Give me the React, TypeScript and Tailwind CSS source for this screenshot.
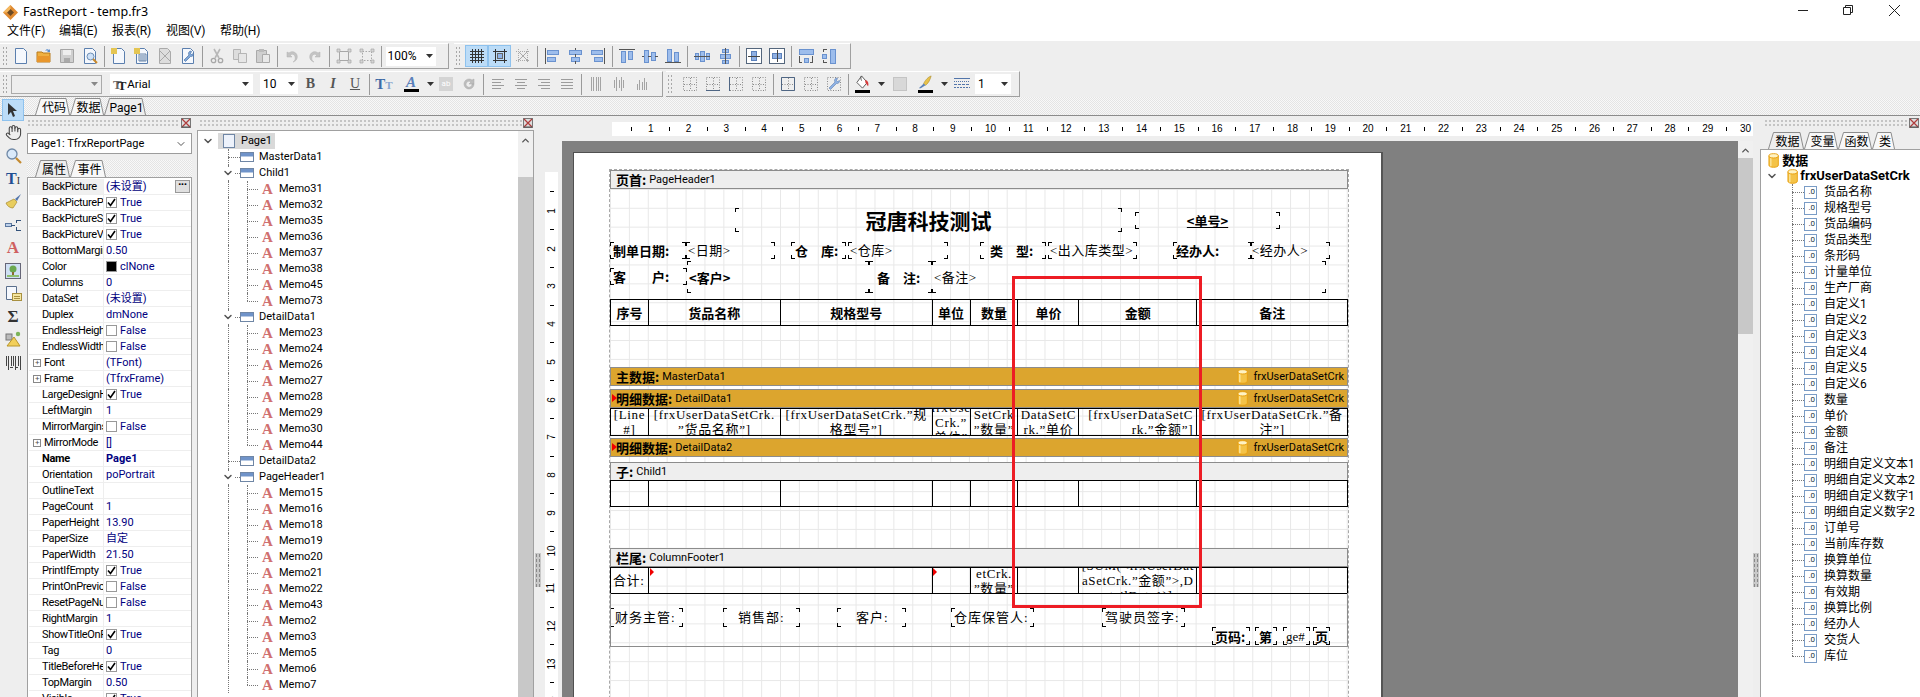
import React from "react";
import { ChevronDown, ChevronUp, Hand } from "lucide-react";

const Ic = ({ children, size = 16 }: { children: React.ReactNode; size?: number }) => (
  <svg viewBox="0 0 16 16" width={size} height={size} fill="none" className="shrink-0">{children}</svg>
);

const Doc = ({ s = "#5b7fae", f = "#f5f8fd" }: { s?: string; f?: string }) => (
  <path d="M2.5 .5h8l3 3v12h-11z" fill={f} stroke={s} />
);
const Star = () => (
  <g fill="#e8c43a"><rect x="0" y="0" width="6" height="6" fill="#f6e48a" /><path d="M0 1h6M0 3h6M0 5h6M1 0v6M3 0v6M5 0v6" stroke="#d4a820" strokeWidth=".6" /></g>
);
const IconNew = () => <Ic><Doc /></Ic>;
const IconOpen = () => (
  <Ic><path d="M1 4h5l1 1h7v9H1z" fill="#f0b040" stroke="#b87a1c" /><path d="M1 8h13v6H1z" fill="#e8962c" /><path d="M9 3c1-2 3-2 4-1l1-1v3h-3l1-1c-1-.6-2-.4-3 0z" fill="#5b8ed0" /></Ic>
);
const IconSave = () => (
  <Ic><path d="M1.500 1.500h13v13h-13z" fill="#cfcfcf" stroke="#a5a5a5" /><path d="M4 2h8v5H4z" fill="#eee" /><path d="M5 10h6v4H5z" fill="#aaa" /></Ic>
);
const IconPreview = () => (
  <Ic><Doc /><circle cx="8.500" cy="8.500" r="3.500" fill="#cfe2f8" stroke="#6e8fb5" /><path d="M11 11l4 4" stroke="#c98a2c" strokeWidth="2" /></Ic>
);
const IconNewPage = () => <Ic><Doc /><Star /></Ic>;
const IconNewDialog = () => (
  <Ic><Doc /><path d="M5 6h7v7H5z" fill="#e4ecf8" stroke="#6b86a8" /><path d="M6 8h5M6 10h5M6 12h5" stroke="#6b86a8" /><Star /></Ic>
);
const IconDelPage = () => (
  <Ic><Doc s="#aaa" f="#ddd" /><path d="M3 3l10 10M13 3L3 13" stroke="#a8a8a8" /></Ic>
);
const IconPageSet = () => (
  <Ic><Doc /><path d="M11 3a2.500 2.500 0 0 0-2 4l-5 5 1.500 1.500 5-5a2.500 2.500 0 0 0 3-3l-2 1-1-1 1-2z" fill="#7ea6d8" stroke="#4e75a8" strokeWidth=".7" /></Ic>
);
const IconCut = () => (
  <Ic><path d="M5 1l5 9M11 1L6 10" stroke="#b8b8b8" strokeWidth="1.600" /><circle cx="4.500" cy="12.500" r="2.200" stroke="#a8a8a8" strokeWidth="1.300" /><circle cx="11.500" cy="12.500" r="2.200" stroke="#a8a8a8" strokeWidth="1.300" /></Ic>
);
const IconCopy = () => (
  <Ic><path d="M1.500 1.500h7v10h-7z" fill="#ddd" stroke="#b5b5b5" /><path d="M6.500 5.500h8v9h-8z" fill="#e6e6e6" stroke="#b5b5b5" /></Ic>
);
const IconPaste = () => (
  <Ic><path d="M1.500 2.500h10v12h-10z" fill="#cfcfcf" stroke="#aaa" /><path d="M4 1h5v3H4z" fill="#bbb" /><path d="M7.500 6.500h7v8h-7z" fill="#e8e8e8" stroke="#aaa" /></Ic>
);
const IconUndo = () => (
  <Ic><path d="M3 4v5h5L6 7c3-2 6 0 5 5-1 1.500-2 2-2 2 5-1 6-8 1-10-2-.8-4 0-5 1z" fill="#c4c4c4" stroke="#b0b0b0" strokeWidth=".5" /></Ic>
);
const IconRedo = () => (
  <Ic><path d="M13 4v5H8l2-2c-3-2-6 0-5 5 1 1.500 2 2 2 2-5-1-6-8-1-10 2-.8 4 0 5 1z" fill="#c4c4c4" stroke="#b0b0b0" strokeWidth=".5" /></Ic>
);
const IconGroup = ({ alt = false }: { alt?: boolean }) => (
  <Ic>
    <rect x="3.500" y="3.500" width="9" height="9" stroke="#a8a8a8" strokeDasharray={alt ? "1.500 1.500" : undefined} />
    <path d="M1 1h3v3H1zM12 1h3v3h-3zM1 12h3v3H1zM12 12h3v3h-3z" fill="#d6d6d6" stroke="#a8a8a8" strokeWidth=".7" />
  </Ic>
);
const IconGrid = () => (
  <Ic><path d="M3.500 1v14M6.500 1v14M9.500 1v14M12.500 1v14M1 3.500h14M1 6.500h14M1 9.500h14M1 12.500h14" stroke="#333" /></Ic>
);
const IconSnap = () => (
  <Ic><path d="M3.500 1v14M12.500 1v14M1 3.500h14M1 12.500h14" stroke="#333" /><rect x="5.500" y="5.500" width="5" height="5" fill="#8fb4e8" stroke="#666" /></Ic>
);
const IconSnap3 = () => (
  <Ic><path d="M3.500 1v14M12.500 1v14M1 3.500h14M1 12.500h14" stroke="#aaa" strokeDasharray="1 1" /><path d="M3 3l10 10M13 3L3 13" stroke="#aaa" /></Ic>
);
type R = [number, number, number, number];
const Bars = ({ r, l }: { r: R[]; l: string }) => (
  <Ic>
    {r.map((b, i) => (<rect key={i} x={b[0] + 0.5} y={b[1] + 0.5} width={b[2]} height={b[3]} fill="#9dbdec" stroke="#6a92cf" />))}
    <path d={l} stroke="#555" />
  </Ic>
);
const Frame = () => (
  <Ic><rect x=".5" y=".5" width="15" height="15" stroke="#54667c" fill="#fff" /><rect x="5.500" y="3.500" width="5" height="9" fill="#8fb0e4" stroke="#5c82bc" /><path d="M2 8.500h12" stroke="#444" /></Ic>
);
const Frame2 = () => (
  <Ic><rect x=".5" y=".5" width="15" height="15" stroke="#54667c" fill="#fff" /><rect x="3.500" y="5.500" width="9" height="5" fill="#8fb0e4" stroke="#5c82bc" /><path d="M8.500 2v12" stroke="#444" /></Ic>
);
const Dash = ({ side }: { side?: "b" | "l" | "t" | "c" | "n" }) => (
  <Ic>
    <rect x="1.500" y="1.500" width="13" height="13" stroke="#8a8a8a" strokeDasharray="1 1.500" />
    <path d="M8.500 2v12M2 8.500h12" stroke="#8a8a8a" strokeDasharray="1 1.500" />
    {side === "b" && <path d="M1 14.500h14" stroke="#4f6684" />}
    {side === "l" && <path d="M1.500 1v14" stroke="#4f6684" />}
    {side === "t" && <path d="M1 1.500h14" stroke="#4f6684" />}
    {side === "c" && <path d="M1.500 1.500h13v13h-13z" stroke="#4f6684" />}
  </Ic>
);
const IconFrameWrench = () => (
  <Ic><rect x="1.500" y="1.500" width="13" height="13" stroke="#8a8a8a" strokeDasharray="1 1.500" /><path d="M11 2a2.500 2.500 0 0 0-2 4L3 12l1.500 1.500 6-6a2.500 2.500 0 0 0 3-3l-2 1-1-1 1-2z" fill="#8db1e4" stroke="#5f80b0" strokeWidth=".6" /></Ic>
);
const IconFill = () => (
  <div className="flex flex-col items-center w-[16px]">
    <Ic size={15}><path d="M7 1l6 7-5 6-6-6z" fill="#fff" stroke="#555" /><path d="M7 1c-1 1-1 3 0 5" stroke="#555" /><path d="M11 5c3 1 4 4 3 7-1-1-2-3-3-4z" fill="#d63a3a" /></Ic>
    <div className="w-[15px] h-[3px] bg-black" />
  </div>
);
const IconPen = () => (
  <div className="flex flex-col items-center w-[16px]">
    <Ic size={15}><path d="M14 1c-3 1-6 4-8 8l2 2c3-2 5-6 6-10z" fill="#e8c24a" stroke="#a88a28" strokeWidth=".6" /><path d="M6 9l2 2-5 3c-1 .5-2 0-2 0 1-1 3-3 5-5z" fill="#5b82b8" /></Ic>
    <div className="w-[15px] h-[3px] bg-black" />
  </div>
);
const IconLine = () => (
  <Ic><path d="M0 2.500h16" stroke="#5376ab" /><path d="M0 5.500h16" stroke="#5376ab" strokeDasharray="1 1" /><path d="M0 8.500h16" stroke="#5376ab" strokeDasharray="3 1" /><path d="M0 11.500h16" stroke="#5376ab" strokeDasharray="2 1" /></Ic>
);
const Tri = ({ c = "#333" }: { c?: string }) => (
  <svg width="7" height="4" viewBox="0 0 7 4" className="shrink-0"><path d="M0 0h7L3.500 4z" fill={c} /></svg>
);
const Db = ({ s = 14 }: { s?: number }) => (
  <svg viewBox="0 0 12 16" width={(s * 12) / 16} height={s} className="shrink-0">
    <path d="M1 3v10c0 3 10 3 10 0V3z" fill="#f4c348" stroke="#e8a010" />
    <path d="M3 5v9" stroke="#fbe39a" strokeWidth="1.500" />
    <ellipse cx="6" cy="3" rx="5" ry="2.300" fill="#fff3c4" stroke="#e8a010" />
  </svg>
);
const BandIcon = () => (
  <svg width="14" height="10" viewBox="0 0 14 10" className="shrink-0">
    <rect x=".5" y=".5" width="13" height="9" fill="#fff" stroke="#6f86a5" />
    <rect x="1" y="1" width="12" height="3.500" fill="#6f93c9" />
  </svg>
);
const CloseX = () => (
  <svg width="10" height="10" viewBox="0 0 10 10" className="shrink-0">
    <rect x=".5" y=".5" width="9" height="9" fill="#ddd" stroke="#777" />
    <path d="M1 1l8 8M9 1L1 9" stroke="#b03c3c" strokeWidth="1.200" />
    <path d="M1 9h8" stroke="#555" />
  </svg>
);
const Grip = () => <div className="w-[6px] h-[20px] shrink-0 bg-[radial-gradient(#a8a8a8_1px,transparent_1px)] bg-[size:3px_4px]" />;
const HGrip = ({ w }: { w: string }) => <div className={`${w} h-[8px] bg-[radial-gradient(#c4c4c4_1px,transparent_1px)] bg-[size:4px_4px]`} />;
const Sep = () => (
  <div className="w-[6px] h-[21px] shrink-0 flex justify-center"><div className="w-px h-full bg-[#9a9a9a]" /></div>
);
const Btn = ({ children, on }: { children?: React.ReactNode; on?: boolean }) => (
  <div className={`w-[23px] h-[22px] shrink-0 flex items-center justify-center ${on ? "bg-[#bcdcf7] border border-[#8ec2ee]" : ""}`}>{children}</div>
);

const Toolbar1 = () => (
  <div className="flex h-[28px] pt-[2px] gap-[5px]">
    <div className="w-[449px] h-[26px] flex items-center pl-[2px] border-b border-r border-[#a0a0a0] border-t border-t-white">
      <Grip /><div className="w-[1.500px]" />
      <Btn><IconNew /></Btn><Btn><IconOpen /></Btn><Btn><IconSave /></Btn><Btn><IconPreview /></Btn><Sep />
      <Btn><IconNewPage /></Btn><Btn><IconNewDialog /></Btn><Btn><IconDelPage /></Btn><Btn><IconPageSet /></Btn><Sep />
      <Btn><IconCut /></Btn><Btn><IconCopy /></Btn><Btn><IconPaste /></Btn><Sep />
      <Btn><IconUndo /></Btn><Btn><IconRedo /></Btn><Sep />
      <Btn><IconGroup /></Btn><Btn><IconGroup alt /></Btn><Sep />
      <div className="w-[50px] h-[19px] bg-white flex items-center justify-between pl-[2px] pr-[3px] text-[12px] ml-[1px]"><span>100%</span><Tri /></div>
    </div>
    <div className="w-[397px] h-[26px] flex items-center pl-[1px] border-b border-r border-[#a0a0a0] border-t border-t-white">
      <Grip /><div className="w-[4px]" />
      <Btn on><IconGrid /></Btn><Btn on><IconSnap /></Btn><Btn><IconSnap3 /></Btn><Sep />
      <Btn><Bars r={[[3, 2, 11, 4], [3, 9, 8, 4]]} l="M1.500 0v16" /></Btn>
      <Btn><Bars r={[[2, 2, 12, 4], [4, 9, 8, 4]]} l="M8.500 0v2M8.500 6v3M8.500 13v3" /></Btn>
      <Btn><Bars r={[[1, 2, 11, 4], [4, 9, 8, 4]]} l="M14.500 0v16" /></Btn><Sep />
      <Btn><Bars r={[[2, 3, 4, 11], [9, 3, 4, 8]]} l="M0 1.500h16" /></Btn>
      <Btn><Bars r={[[2, 2, 4, 12], [9, 4, 4, 8]]} l="M0 8.500h2M6 8.500h3M13 8.500h3" /></Btn>
      <Btn><Bars r={[[2, 1, 4, 12], [9, 4, 4, 9]]} l="M0 14.500h16" /></Btn><Sep />
      <Btn><Bars r={[[1, 5, 3, 6], [6, 3, 4, 10], [12, 5, 3, 6]]} l="M0 8.500h16" /></Btn>
      <Btn><Bars r={[[5, 1, 6, 3], [3, 6, 10, 4], [5, 12, 6, 3]]} l="M8.500 0v16" /></Btn><Sep />
      <Btn><Frame /></Btn><Btn><Frame2 /></Btn><Sep />
      <Btn><Bars r={[[1, 1, 14, 5], [6, 10, 4, 4]]} l="M1.500 8v6M14.500 8v6M1 14.500h3M12 14.500h3" /></Btn>
      <Btn><Bars r={[[9, 1, 5, 14], [1, 6, 4, 4]]} l="M2 1.500h4M2 14.500h4M2.500 1v3M2.500 12v3" /></Btn>
    </div>
  </div>
);

const Toolbar2 = () => (
  <div className="flex h-[28px] pt-[2px] gap-[3px]">
    <div className="w-[663px] h-[26px] flex items-center pl-[2px] border-b border-r border-[#a0a0a0] border-t border-t-white">
      <Grip />
      <div className="ml-[3px] w-[91px] h-[19px] border border-[#aaa] bg-[#eee] flex items-center justify-end pr-[3px]"><Tri c="#888" /></div>
      <div className="ml-[8px] w-[143px] h-[20px] bg-white flex items-center justify-between pr-[4px] pl-[3px]">
        <span className="flex items-center">
          <span className="font-['Liberation_Serif',serif] font-bold text-[13px] text-[#666] leading-none">T</span>
          <span className="font-['Liberation_Serif',serif] font-bold text-[13px] text-[#222] leading-none -ml-[4px] mt-[2px]">T</span>
          <span className="text-[11.500px] ml-[1px]">Arial</span>
        </span><Tri />
      </div>
      <div className="ml-[7px] w-[38px] h-[20px] bg-white flex items-center justify-between pr-[3px] pl-[3px] text-[12px]"><span>10</span><Tri /></div>
      <div className="ml-[1px] w-[23px] text-center font-['Liberation_Serif',serif] font-bold text-[14px] text-[#555]">B</div>
      <div className="w-[22px] text-center font-['Liberation_Serif',serif] italic font-bold text-[14px] text-[#555]">I</div>
      <div className="w-[22px] text-center font-['Liberation_Serif',serif] text-[14px] text-[#555] underline">U</div><Sep />
      <div className="w-[24px] text-center font-['Liberation_Serif',serif] font-bold text-[15px] text-[#3f6aa5]">T<span className="text-[11px] text-[#88a6cf]">T</span></div>
      <div className="w-[24px] ml-[3px] flex flex-col items-center leading-none"><span className="font-['Liberation_Serif',serif] italic font-bold text-[15px] text-[#5a80bb] leading-[13px]">A</span><div className="w-[15px] h-[3px] bg-black" /></div>
      <div className="ml-[2px] w-[10px] flex justify-center"><Tri /></div>
      <div className="ml-[4px] w-[14px] h-[14px] bg-[#d4d4d4] text-[8px] text-white flex items-center justify-center">ab</div>
      <div className="w-[23px] ml-[4px] flex justify-center"><Ic><path d="M13 8a5 5 0 1 1-2-4l2-1v5H8l2-2a3 3 0 1 0 1 2z" fill="#bdbdbd" stroke="#aaa" strokeWidth=".5" /></Ic></div><Sep />
      {["M2 3.500h12M2 6.500h9M2 9.500h12M2 12.500h9", "M2 3.500h12M4 6.500h8M2 9.500h12M4 12.500h8", "M2 3.500h12M5 6.500h9M2 9.500h12M5 12.500h9", "M2 3.500h12M2 6.500h12M2 9.500h12M2 12.500h12"].map((d, i) => (
        <Btn key={i}><Ic><path d={d} stroke="#9c9c9c" /></Ic></Btn>
      ))}<Sep />
      {["M3.500 1v14M5.500 1v14M8.500 1v14M10.500 1v14M12.500 1v14", "M3.500 4v8M5.500 1v14M8.500 4v8M10.500 1v14M12.500 4v8", "M3.500 8v6M5.500 4v10M8.500 6v8M10.500 2v12M12.500 6v8"].map((d, i) => (
        <Btn key={i}><Ic><path d={d} stroke="#a4a4a4" /></Ic></Btn>
      ))}
    </div>
    <div className="w-[354px] h-[26px] flex items-center pl-[1px] border-b border-r border-[#a0a0a0] border-t border-t-white">
      <Grip /><div className="w-[5px]" />
      <Btn><Dash side="n" /></Btn><Btn><Dash side="b" /></Btn><Btn><Dash side="l" /></Btn><Btn><Dash side="n" /></Btn><Sep />
      <Btn><Dash side="c" /></Btn><Btn><Dash side="n" /></Btn><Btn><IconFrameWrench /></Btn><Sep />
      <div className="ml-[3px] w-[16px]"><IconFill /></div>
      <div className="ml-[6px] w-[10px] flex justify-center"><Tri /></div>
      <div className="ml-[7px] w-[14px] h-[14px] bg-[#d8d8d8] border border-[#c4c4c4]" />
      <div className="ml-[10px] w-[16px]"><IconPen /></div>
      <div className="ml-[6px] w-[10px] flex justify-center"><Tri /></div>
      <div className="ml-[5px]"><IconLine /></div>
      <div className="ml-[5px] w-[36px] h-[20px] bg-white flex items-center justify-between pl-[3px] pr-[3px] text-[12px]"><span>1</span><Tri /></div>
    </div>
  </div>
);

const Tab = ({ label, w, active }: { label: string; w: number; active?: boolean }) => (
  <div className="relative h-[17px] flex items-center justify-center shrink-0 text-[12px]" style={{ width: w }}>
    <svg className="absolute inset-0" width={w} height={17} viewBox={`0 0 ${w} 17`}>
      <path d={`M0.500 17L5.500 .5H${w - 4}L${w - 0.5} 17`} fill={active ? "#eee" : "#f8f8f8"} stroke="#8c8c8c" />
    </svg>
    <span className="relative pl-[3px] mt-[2px]">{label}</span>
  </div>
);

const ToolItem = ({ children }: { children: React.ReactNode }) => (
  <div className="h-[23px] w-full flex items-center justify-center">{children}</div>
);

const ToolColumn = () => (
  <div className="w-[24px] shrink-0 flex flex-col items-center pl-[2px]">
    <div className="-mt-[17px] relative z-10 w-[22px] h-[22px] bg-[#bcdcf7] border border-[#8ec2ee] flex items-center justify-center">
      <svg width="14" height="16" viewBox="0 0 14 16"><path d="M2 1v12l3-3 2 5 2-1-2-5h4z" fill="#333" /></svg>
    </div>
    <ToolItem><Hand size={17} strokeWidth={1.500} color="#444" /></ToolItem>
    <ToolItem><svg width="17" height="17" viewBox="0 0 17 17"><circle cx="7" cy="7" r="5" fill="#d9e9fa" stroke="#6f88a6" strokeWidth="1.300" /><path d="M11 11l5 5" stroke="#c48a30" strokeWidth="2.200" /></svg></ToolItem>
    <ToolItem><span className="font-['Liberation_Serif',serif] font-bold text-[16px] text-[#1f4f92] leading-none">T<span className="text-[10px] font-normal text-[#333]">I</span></span></ToolItem>
    <ToolItem><svg width="17" height="17" viewBox="0 0 17 17"><path d="M16 1l-6 5 2 2z" fill="#5376ab" /><path d="M9 6l3 3-4 6C5 15 2 13 1 10z" fill="#e8cd5e" stroke="#a88a30" strokeWidth=".7" /></svg></ToolItem>
    <ToolItem><svg width="18" height="16" viewBox="0 0 18 16"><rect x="1.500" y="6.500" width="6" height="3" fill="#bcd0ea" stroke="#5c78a0" /><path d="M7 8.500h4M12 3.500h5M12 13.500h5M12.500 3v3M12.500 10v3" stroke="#33527a" /></svg></ToolItem>
    <ToolItem><span className="font-['Liberation_Serif',serif] font-bold text-[17px] text-[#cf6060] leading-none">A</span></ToolItem>
    <ToolItem><svg width="16" height="16" viewBox="0 0 16 16"><rect x=".5" y=".5" width="15" height="15" fill="#cfe0f4" stroke="#667" /><circle cx="8" cy="6" r="3.500" fill="#6aa84f" /><rect x="7" y="9" width="2" height="4" fill="#8a6a30" /><rect x="2" y="12" width="12" height="2" fill="#8fbf70" /></svg></ToolItem>
    <ToolItem><svg width="17" height="17" viewBox="0 0 17 17"><path d="M1.500 1.500h10v13h-10z" fill="#f5f8fd" stroke="#5a6f8c" /><rect x="7.500" y="8.500" width="9" height="7" fill="#f4e6a0" stroke="#a89040" /><path d="M9 11.500h6M9 13.500h6" stroke="#a89040" /></svg></ToolItem>
    <ToolItem><span className="font-['Liberation_Serif',serif] font-bold text-[17px] text-[#333] leading-none">Σ</span></ToolItem>
    <ToolItem><svg width="17" height="17" viewBox="0 0 17 17"><rect x="1" y="3" width="6" height="6" fill="#bbb" stroke="#777" /><circle cx="13" cy="3" r="2.200" fill="#7db45a" /><path d="M9 6l6 9H2z" fill="#f2cf5a" stroke="#b8962c" /></svg></ToolItem>
    <ToolItem><svg width="16" height="14" viewBox="0 0 16 14"><path d="M1.500 0v10M3.500 0v14M6.500 0v10M8.500 0v10M10.500 0v14M13.500 0v10M15.500 0v14" stroke="#444" /><path d="M5 11.500h3M11 11.500h2" stroke="#444" /></svg></ToolItem>
  </div>
);

type Row = { n: string; v?: string; ck?: boolean; sq?: boolean; plus?: boolean; bold?: boolean; sel?: boolean };
const rows: Row[] = [
  { n: "BackPicture", v: "(未设置)", sel: true },
  { n: "BackPicturePr", v: "True", ck: true },
  { n: "BackPictureSt", v: "True", ck: true },
  { n: "BackPictureVi", v: "True", ck: true },
  { n: "BottomMargin", v: "0.50" },
  { n: "Color", v: "clNone", sq: true },
  { n: "Columns", v: "0" },
  { n: "DataSet", v: "(未设置)" },
  { n: "Duplex", v: "dmNone" },
  { n: "EndlessHeigh", v: "False", ck: false },
  { n: "EndlessWidth", v: "False", ck: false },
  { n: "Font", v: "(TFont)", plus: true },
  { n: "Frame", v: "(TfrxFrame)", plus: true },
  { n: "LargeDesignH", v: "True", ck: true },
  { n: "LeftMargin", v: "1" },
  { n: "MirrorMargins", v: "False", ck: false },
  { n: "MirrorMode", v: "[]", plus: true },
  { n: "Name", v: "Page1", bold: true },
  { n: "Orientation", v: "poPortrait" },
  { n: "OutlineText", v: "" },
  { n: "PageCount", v: "1" },
  { n: "PaperHeight", v: "13.90" },
  { n: "PaperSize", v: "自定" },
  { n: "PaperWidth", v: "21.50" },
  { n: "PrintIfEmpty", v: "True", ck: true },
  { n: "PrintOnPrevic", v: "False", ck: false },
  { n: "ResetPageNu", v: "False", ck: false },
  { n: "RightMargin", v: "1" },
  { n: "ShowTitleOnP", v: "True", ck: true },
  { n: "Tag", v: "0" },
  { n: "TitleBeforeHe", v: "True", ck: true },
  { n: "TopMargin", v: "0.50" },
  { n: "Visible", v: "True", ck: true },
];

const Inspector = () => (
  <div className="w-[165px] shrink-0 ml-[3px] flex flex-col h-full">
    <div className="flex items-center h-[8px] mt-[3px] gap-[1px]"><HGrip w="w-[153px]" /><CloseX /></div>
    <div className="mt-[6px] h-[21px] border border-[#9c9c9c] bg-white flex items-center justify-between pl-[3px] pr-[4px] text-[11px]">
      <span>Page1: TfrxReportPage</span><ChevronDown size={12} color="#555" />
    </div>
    <div className="mt-[6px] h-[17px] flex pl-[8px] bg-[repeating-conic-gradient(#e4e4e4_0_25%,#f8f8f8_0_50%)] bg-[size:2px_2px]">
      <Tab label="属性" w={35} active /><Tab label="事件" w={36} />
    </div>
    <div className="flex-1 min-h-0 overflow-hidden border-x border-t border-[#a0a0a0] bg-white pt-[1px] pl-[1px]">
      {rows.map((r) => (
        <div key={r.n} className="h-[16px] flex border-b border-[#eeeeee] items-center relative">
          <div className={`w-[75px] h-full shrink-0 overflow-hidden whitespace-nowrap border-r border-[#eeeeee] flex items-center tracking-[-0.35px] ${r.sel ? "bg-[#f0f0f0]" : ""} ${r.bold ? "font-bold" : ""}`}>
            {r.plus ? (
              <span className="w-[13px] h-[9px] flex items-center justify-start ml-[4px] shrink-0 mr-[1px]">
                <span className="w-[8px] h-[8px] border border-[#888] text-[8px] leading-[6px] text-center text-[#555] block">+</span>
              </span>
            ) : <span className="w-[13px] shrink-0" />}
            <span className={r.plus ? "-ml-[3px]" : ""}>{r.n}</span>
          </div>
          <div className={`pl-[2px] flex items-center text-[#000080] whitespace-nowrap ${r.bold ? "font-bold" : ""}`}>
            {r.ck !== undefined && (
              <span className="w-[11px] h-[11px] border border-[#999] bg-white mr-[3px] flex items-center justify-center">
                {r.ck && <svg width="9" height="9" viewBox="0 0 9 9"><path d="M1 4.500l2.500 3L8 1" stroke="#000" strokeWidth="1.600" fill="none" /></svg>}
              </span>
            )}
            {r.sq && <span className="w-[11px] h-[11px] bg-black border border-[#999] mr-[3px]" />}
            <span>{r.v}</span>
          </div>
          {r.sel && (
            <div className="absolute right-[1px] top-[1px] w-[15px] h-[13px] bg-[#e0e0e0] border border-[#999] text-[8px] font-bold leading-[8px] text-center">•••</div>
          )}
        </div>
      ))}
    </div>
  </div>
);

const AIcon = () => (
  <span className="w-[13px] h-[16px] shrink-0 flex items-center justify-center font-['Liberation_Serif',serif] font-bold text-[15px] text-[#d07070]">A</span>
);

type TN = { k: "page" | "band" | "memo"; t: string; open?: boolean; last?: boolean };
const mem = (ids: number[]): TN[] => ids.map((i, idx) => ({ k: "memo", t: `Memo${i}`, last: idx === ids.length - 1 }));
const treeRows: TN[] = [
  { k: "page", t: "Page1", open: true },
  { k: "band", t: "MasterData1" },
  { k: "band", t: "Child1", open: true },
  ...mem([31, 32, 35, 36, 37, 38, 45, 73]),
  { k: "band", t: "DetailData1", open: true },
  ...mem([23, 24, 26, 27, 28, 29, 30, 44]),
  { k: "band", t: "DetailData2" },
  { k: "band", t: "PageHeader1", open: true },
  ...mem([15, 16, 18, 19, 20, 21, 22, 43, 2, 3, 5, 6, 7]),
];

const TreeRow = ({ n }: { n: TN }) => {
  if (n.k === "page")
    return (
      <div className="h-[16px] flex items-center relative">
        <span className="absolute left-[4px] top-[2px]"><ChevronDown size={12} strokeWidth={3} color="#555" /></span>
        <div className="ml-[20px] h-[16px] w-[57px] bg-[#d9d9d9] flex items-center pl-[5px]">
          <svg width="12" height="14" viewBox="0 0 12 14" className="shrink-0"><rect x=".5" y=".5" width="11" height="13" fill="#edf2fb" stroke="#6f86a5" /></svg>
          <span className="ml-[6px]">Page1</span>
        </div>
      </div>
    );
  if (n.k === "band")
    return (
      <div className="h-[16px] flex items-center relative">
        <div className="absolute left-[30px] top-0 bottom-0 border-l border-dotted border-[#777]" />
        <div className="absolute left-[30px] top-[8px] w-[12px] border-t border-dotted border-[#777]" />
        {n.open && <span className="absolute left-[24px] top-[2px] bg-white"><ChevronDown size={12} strokeWidth={3} color="#555" /></span>}
        <div className="ml-[42px] flex items-center"><BandIcon /><span className="ml-[5px]">{n.t}</span></div>
      </div>
    );
  return (
    <div className="h-[16px] flex items-center relative">
      <div className="absolute left-[30px] top-0 bottom-0 border-l border-dotted border-[#777]" />
      <div className={`absolute left-[49px] top-0 border-l border-dotted border-[#777] ${n.last ? "h-[8px]" : "bottom-0"}`} />
      <div className="absolute left-[49px] top-[8px] w-[11px] border-t border-dotted border-[#777]" />
      <div className="ml-[63px] flex items-center"><AIcon /><span className="ml-[5px]">{n.t}</span></div>
    </div>
  );
};

const Scroll = ({ arrowH, thumb, w }: { arrowH: string; thumb: string; w: string }) => (
  <div className={`${w} shrink-0 bg-[#f0f0f0] flex flex-col h-full`}>
    <div className={`${arrowH} flex justify-center pt-[4px]`}><ChevronUp size={11} strokeWidth={3} color="#555" /></div>
    <div className={`${thumb} bg-[#c8c8c8]`} />
  </div>
);

const TreePanel = () => (
  <div className="w-[337px] shrink-0 ml-[5px] flex flex-col h-full">
    <div className="flex items-center h-[8px] mt-[3px] pl-[2px] gap-[1px]"><HGrip w="w-[323px]" /><CloseX /></div>
    <div className="mt-[3px] flex-1 min-h-0 border-x border-t border-[#a0a0a0] bg-white flex overflow-hidden">
      <div className="flex-1 pt-[2px] overflow-hidden">
        {treeRows.map((n, i) => <TreeRow key={i} n={n} />)}
      </div>
      <Scroll arrowH="h-[46px]" thumb="flex-1" w="w-[15px]" />
    </div>
  </div>
);

const TopRuler = () => (
  <div className="h-[14px] bg-white ml-[78px] w-[1141px] flex items-center pl-[10.500px] overflow-hidden font-['Liberation_Sans',sans-serif] text-[10px] text-black">
    {Array.from({ length: 60 }, (_, i) => (
      <div key={i} className="w-[18.875px] shrink-0 flex items-center justify-center">
        {i % 2 === 0 ? <span className="w-px h-[4px] bg-black" /> : <span className="leading-none">{(i + 1) / 2}</span>}
      </div>
    ))}
  </div>
);

const LeftRuler = () => (
  <div className="w-[13px] ml-[3px] mt-[31px] bg-white h-[525px] flex flex-col items-center pt-[10.500px] overflow-hidden font-['Liberation_Sans',sans-serif] text-[10px] text-black">
    {Array.from({ length: 28 }, (_, i) => (
      <div key={i} className="h-[18.875px] shrink-0 flex items-center justify-center">
        {i % 2 === 0 ? <span className="h-px w-[4px] bg-black" /> : <span className="leading-none -rotate-90">{(i + 1) / 2}</span>}
      </div>
    ))}
  </div>
);

const Splitter = () => (
  <div className="h-[34px] w-[6px] bg-[#c8c8c8] bg-[radial-gradient(#888_1px,transparent_1px)] bg-[size:3px_5px]" />
);

/* —— report canvas: objects sit at their own place on the design page —— */
const OX = 610;
const OY = 170;
const serif = "font-['Liberation_Serif','Noto_Sans_CJK_SC',serif]";
const cjk = "font-['Noto_Sans_CJK_SC','Liberation_Sans',sans-serif]";

const Corners = () => (
  <>
    <span className="absolute left-0 top-0 w-[4px] h-[4px] border-l border-t border-black" />
    <span className="absolute right-0 top-0 w-[4px] h-[4px] border-r border-t border-black" />
    <span className="absolute left-0 bottom-0 w-[4px] h-[4px] border-l border-b border-black" />
    <span className="absolute right-0 bottom-0 w-[4px] h-[4px] border-r border-b border-black" />
  </>
);

type M = [number, number, number, number, string, string];
const B13 = `${cjk} text-[13px] font-bold`;
const N13 = `${serif} text-[13px] tracking-[0.5px]`;
const memos: M[] = [
  [735, 208, 1122, 232, "冠唐科技测试", `${cjk} text-[21px] font-bold justify-center`],
  [1135, 212, 1280, 229, "<单号>", `${cjk} text-[13px] font-bold underline justify-center`],
  [610, 242, 686, 259, "制单日期:", `${B13} pl-[3px]`],
  [686, 242, 775, 259, "<日期>", `${N13} pl-[2px]`],
  [791, 242, 846, 259, "仓　库:", `${B13} pl-[4px]`],
  [848, 242, 948, 259, "<仓库>", `${N13} pl-[2px]`],
  [980, 242, 1046, 259, "类　型:", `${B13} pl-[10px]`],
  [1048, 242, 1137, 259, "<出入库类型>", `${N13} pl-[2px]`],
  [1173, 242, 1252, 259, "经办人:", `${B13} pl-[3px]`],
  [1250, 242, 1330, 259, "<经办人>", `${N13} pl-[2px]`],
  [610, 268, 687, 285, "客　　户:", `${B13} pl-[3px]`],
  [687, 261, 869, 293, "<客户>", `${B13} pl-[2px]`],
  [869, 261, 932, 293, "备　注:", `${B13} pl-[8px]`],
  [932, 261, 1326, 293, "<备注>", `${N13} pl-[2px]`],
  [610, 608, 683, 627, "财务主管:", `${N13} tracking-[1px] pl-[5px]`],
  [723, 608, 800, 627, "销售部:", `${N13} tracking-[1px] pl-[15px]`],
  [837, 608, 906, 627, "客户:", `${N13} tracking-[1px] pl-[19px]`],
  [951, 608, 1034, 627, "仓库保管人:", `${N13} tracking-[1px] pl-[3px]`],
  [1102, 608, 1185, 627, "驾驶员签字:", `${N13} tracking-[1px] pl-[3px]`],
  [1212, 627, 1250, 645, "页码:", `${B13} pl-[3px]`],
  [1255, 627, 1277, 645, "第", `${B13} pl-[4px]`],
  [1283, 627, 1310, 645, "ge#", `${serif} text-[13px] pl-[3px]`],
  [1313, 627, 1330, 645, "页", `${B13} pl-[2px]`],
];

const Memo = ({ m }: { m: M }) => (
  <div
    className={`absolute flex items-center whitespace-pre leading-none ${m[5]}`}
    style={{ left: m[0] - OX, top: m[1] - OY, width: m[2] - m[0], height: m[3] - m[1] }}
  >
    <Corners />
    {m[4]}
  </div>
);

const Flag = () => (
  <span className="absolute left-[1px] top-[4px] w-0 h-0 border-l-[5px] border-l-[#f00000] border-y-[4px] border-y-transparent" />
);

type BandP = { y: number; y2: number; a: string; b: string; gold?: boolean; flag?: boolean };
const bands: BandP[] = [
  { y: 170, y2: 189, a: "页首:", b: "PageHeader1" },
  { y: 367, y2: 386, a: "主数据:", b: "MasterData1", gold: true },
  { y: 389, y2: 408, a: "明细数据:", b: "DetailData1", gold: true, flag: true },
  { y: 438, y2: 457, a: "明细数据:", b: "DetailData2", gold: true, flag: true },
  { y: 462, y2: 481, a: "子:", b: "Child1" },
  { y: 548, y2: 567, a: "栏尾:", b: "ColumnFooter1" },
];

const Band = ({ d }: { d: BandP }) => (
  <div
    className={`absolute left-0 right-0 flex items-center justify-between pl-[5px] pr-[3px] border border-[#8c8c8c] ${d.gold ? "bg-[#dca52e]" : "bg-[#eeeeee]"}`}
    style={{ top: d.y - OY, height: d.y2 - d.y }}
  >
    {d.flag && <Flag />}
    <span className="flex items-center whitespace-nowrap"><span className={`${cjk} text-[13px] font-bold`}>{d.a}</span><span className="ml-[3px]">{d.b}</span></span>
    {d.gold && <span className="flex items-center gap-[5px]"><Db s={15} /><span>frxUserDataSetCrk</span></span>}
  </div>
);

const edges = [610, 648, 780, 932, 970, 1018, 1079, 1197, 1347];
const Cells = ({ y, y2, vals, cls, skip, right }: { y: number; y2: number; vals: string[]; cls: string; skip?: boolean; right?: boolean }) => (
  <div className="absolute left-0 flex border border-black" style={{ top: y - OY, height: y2 - y + 1, width: 738 }}>
    {vals.map((v, i) => {
      if (skip && i === 1) return null;
      const wide = skip && i === 2;
      const w = wide ? edges[3] - edges[1] : edges[i + 1] - edges[i];
      return (
        <div key={i} className={`relative h-full overflow-hidden flex items-center border-black whitespace-pre-line leading-[15px] ${i < vals.length - 1 ? "border-r" : ""} ${cls} ${right && i === 6 ? "justify-end text-right pr-[3px]" : i === 0 && skip ? "justify-start text-left pl-[2px]" : "justify-center text-center"}`} style={{ width: w }}>
          <div className="whitespace-pre-line shrink-0">{v}</div>
        </div>
      );
    })}
  </div>
);

const Report = () => (
  <div className="relative ml-[35px] mt-[16px] w-[740px] h-[600px] border-l border-r border-t border-dashed border-[#a8a8a8] bg-[linear-gradient(#e8e8e8_1px,transparent_1px),linear-gradient(90deg,#e8e8e8_1px,transparent_1px)] bg-[size:18.900px_18.900px]">
    {bands.map((d) => <Band key={d.y} d={d} />)}
    {memos.map((m, i) => <Memo key={i} m={m} />)}
    <Cells y={299} y2={325} cls={`${cjk} text-[13px] font-bold`} vals={["序号", "货品名称", "规格型号", "单位", "数量", "单价", "金额", "备注"]} />
    <Cells y={408} y2={435} right cls={`${serif} text-[13px] tracking-[0.7px]`} vals={["[Line\n#]", "[frxUserDataSetCrk.\n”货品名称”]", "[frxUserDataSetCrk.”规\n格型号”]", "[frxUser\nCrk.”\n单位”", "SetCrk\n”数量”", "DataSetC\nrk.”单价", "[frxUserDataSetC\nrk.”金额”]", "[frxUserDataSetCrk.”备\n注”]"]} />
    <Cells y={480} y2={506} cls="" vals={["", "", "", "", "", "", "", ""]} />
    <Cells y={567} y2={593} skip cls={`${serif} text-[13px] tracking-[0.6px]`} vals={["合计:", "", "", "", "etCrk.\n”数量”", "", "[SUM(<frxUserDat\naSetCrk.”金额”>,D\netailData1)]", ""]} />
    <span className="absolute left-[40px] top-[398px] w-0 h-0 border-l-[4px] border-l-[#f00000] border-y-[4px] border-y-transparent" />
    <span className="absolute left-[323px] top-[398px] w-0 h-0 border-l-[4px] border-l-[#f00000] border-y-[4px] border-y-transparent" />
    <div className="absolute left-0 w-px bg-[#8c8c8c]" style={{ top: 593 - OY, height: 53 }} />
    <div className="absolute w-px bg-[#8c8c8c]" style={{ left: 737, top: 593 - OY, height: 53 }} />
    <div className="absolute left-0 h-px w-[738px] bg-[#8c8c8c]" style={{ top: 646 - OY }} />
    <div className="absolute z-20 pointer-events-none border-[3px] border-[#ed1c24]" style={{ left: 1012 - OX, top: 276 - OY, width: 190, height: 332 }} />
  </div>
);

const DesignArea = () => (
  <div className="w-[1226px] shrink-0 flex flex-col h-full">
    <div className="pt-[6px] h-[25px]"><TopRuler /></div>
    <div className="flex-1 min-h-0 flex">
      <div className="w-[28px] shrink-0 flex">
        <div className="w-[7px] ml-[1px] pt-[412px]"><Splitter /></div>
        <LeftRuler />
      </div>
      <div className="w-[1176px] shrink-0 h-full bg-[#808080] overflow-hidden pt-[11px] pl-[11px]">
        <div className="w-[810px] h-[600px] bg-white border-l border-t border-[#505050] border-r-2 border-r-[#555]">
          <Report />
        </div>
      </div>
      <Scroll arrowH="h-[17px]" thumb="h-[176px]" w="w-[15px]" />
      <div className="w-[7px] shrink-0 pt-[412px]"><Splitter /></div>
    </div>
  </div>
);

const leaves = ["货品名称", "规格型号", "货品编码", "货品类型", "条形码", "计量单位", "生产厂商", "自定义1", "自定义2", "自定义3", "自定义4", "自定义5", "自定义6", "数量", "单价", "金额", "备注", "明细自定义文本1", "明细自定义文本2", "明细自定义数字1", "明细自定义数字2", "订单号", "当前库存数", "换算单位", "换算数量", "有效期", "换算比例", "经办人", "交货人", "库位"];

const RightPanel = () => (
  <div className="w-[160px] shrink-0 flex flex-col h-full">
    <div className="flex items-center h-[8px] mt-[3px] pl-[4px] gap-[1px]"><HGrip w="w-[144px]" /><CloseX /></div>
    <div className="mt-[5px] h-[17px] flex pl-[8px] items-end">
      <Tab label="数据" w={36} active /><Tab label="变量" w={34} /><Tab label="函数" w={34} /><Tab label="类" w={23} />
    </div>
    <div className="flex-1 min-h-0 border-l border-t border-[#a0a0a0] bg-white pt-[2px] text-[12px] overflow-hidden">
      <div className="h-[16px] flex items-center pl-[7px] relative">
        <Db s={15} /><span className={`ml-[3px] ${cjk} font-bold text-[13px]`}>数据</span>
      </div>
      <div className="h-[16px] flex items-center relative">
        <span className="absolute left-[5px] top-[2px]"><ChevronDown size={12} strokeWidth={3} color="#555" /></span>
        <span className="ml-[26px]"><Db s={15} /></span>
        <span className="ml-[2px] font-bold text-[13px]">frxUserDataSetCrk</span>
      </div>
      {leaves.map((t, i) => (
        <div key={t} className="h-[16px] flex items-center relative">
          <div className={`absolute left-[31px] top-0 border-l border-dotted border-[#777] ${i === leaves.length - 1 ? "h-[8px]" : "bottom-0"}`} />
          <div className="absolute left-[31px] top-[8px] w-[12px] border-t border-dotted border-[#777]" />
          <span className="ml-[43px] w-[13px] h-[13px] shrink-0 border border-[#7a9cc6] bg-white text-[8px] leading-[10px] text-right pr-[1px] text-[#234]">.0</span>
          <span className="ml-[7px] whitespace-nowrap">{t}</span>
        </div>
      ))}
    </div>
  </div>
);

export default function App() {
  return (
    <div className="w-[1920px] h-[697px] overflow-hidden bg-[#eeeeee] text-black flex flex-col font-['Roboto','Noto_Sans_CJK_SC',sans-serif] text-[11px] leading-[14px]">
      <div className="h-[21px] bg-white flex items-center relative shrink-0">
        <svg width="15" height="15" viewBox="0 0 15 15" className="ml-[3px] mt-[4px]"><path d="M7.500 0L15 7.500 7.500 15 0 7.500z" fill="#e08a30" /><path d="M7.500 4l3.500 3.500L7.500 11 4 7.500z" fill="#6b4a24" /><path d="M0 7.500L7.500 0v4L4 7.500z" fill="#f4b860" /></svg>
        <span className="ml-[5px] mt-[3px] text-[12.500px] font-['Noto_Sans',sans-serif]">FastReport - temp.fr3</span>
        <div className="ml-auto flex items-center mt-[-1px] mr-[20px]">
          <svg width="10" height="10" viewBox="0 0 10 10"><path d="M0 5.500h10" stroke="#222" /></svg>
          <svg width="10" height="10" viewBox="0 0 10 10" className="ml-[35px]"><path d="M.5 2.500h7v7h-7zM2.500 2.500v-2h7v7h-2" stroke="#222" fill="none" /></svg>
          <svg width="11" height="11" viewBox="0 0 11 11" className="ml-[36px]"><path d="M0 0l11 11M11 0L0 11" stroke="#222" /></svg>
        </div>
      </div>
      <div className="h-[20px] bg-white flex items-center text-[12px] pl-[7px] shrink-0 tracking-[-0.1px]">
        <span className="w-[52px]">文件(F)</span><span className="w-[53px]">编辑(E)</span><span className="w-[54px]">报表(R)</span><span className="w-[54px]">视图(V)</span><span>帮助(H)</span>
      </div>
      <div className="shrink-0 h-[56px]"><Toolbar1 /><Toolbar2 /></div>
      <div className="shrink-0 h-[19px] flex items-end pl-[35px] border-b border-[#8c8c8c] bg-[repeating-conic-gradient(#e4e4e4_0_25%,#f8f8f8_0_50%)] bg-[size:2px_2px]">
        <Tab label="代码" w={35} /><Tab label="数据" w={34} /><Tab label="Page1" w={42} active />
      </div>
      <div className="flex-1 min-h-0 flex">
        <ToolColumn />
        <Inspector />
        <TreePanel />
        <DesignArea />
        <RightPanel />
      </div>
    </div>
  );
}
